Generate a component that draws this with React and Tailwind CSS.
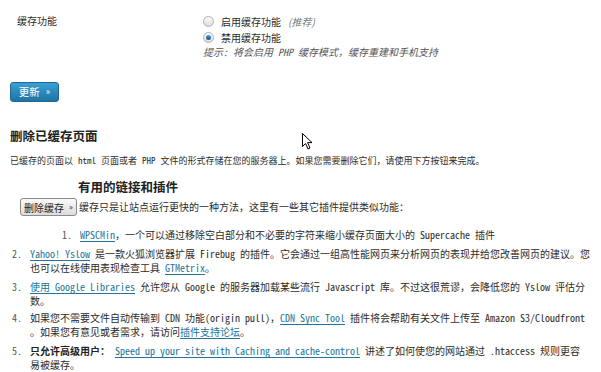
import React from "react";

const linkCls = "text-[#21759b] underline decoration-[#21759b] underline-offset-[2px]";

function Radio({ checked }) {
  return (
    <span className="flex h-[11px] w-[11px] items-center justify-center rounded-full border border-[#b0b0b0] bg-linear-to-b from-[#fafafa] to-[#dedede]">
      {checked && (
        <span className="h-[5px] w-[5px] rounded-full bg-linear-to-b from-[#4a9fd8] to-[#14558a]" />
      )}
    </span>
  );
}

function Item({ n, children }) {
  return (
    <li className="flex">
      <span className="w-[18px] shrink-0 text-[#555]">{n}.</span>
      <div className="whitespace-nowrap">{children}</div>
    </li>
  );
}

export default function App() {
  return (
    <div className="relative h-[372px] w-[601px] overflow-hidden bg-white text-[#2b2b2b] font-['Noto_Sans_Mono_CJK_SC','Noto_Sans_CJK_SC',sans-serif]">
      {/* cache setting */}
      <div className="flex pt-[13px] text-[10px] font-['Noto_Sans_CJK_SC',sans-serif]">
        <div className="w-[203px] pl-[17px] leading-[16px]">缓存功能</div>
        <div>
          <label className="flex h-[16px] items-center">
            <Radio />
            <span className="ml-[7px]">启用缓存功能</span>
            <i className="ml-[7px] text-[#777]">(推荐)</i>
          </label>
          <label className="flex h-[16px] items-center">
            <Radio checked />
            <span className="ml-[7px]">禁用缓存功能</span>
          </label>
          <p className="italic leading-[14px] text-[#555] font-['Noto_Sans_Mono_CJK_SC','Noto_Sans_CJK_SC',sans-serif]">
            提示: 将会启用 PHP 缓存模式，缓存重建和手机支持
          </p>
        </div>
      </div>

      <button className="ml-[10px] mt-[23px] flex h-[20px] w-[49px] items-center justify-center gap-[6px] rounded-[3px] border border-[#1d6894] bg-linear-to-b from-[#3aa0d4] to-[#1f74a3] text-[10.5px] text-white font-['Noto_Sans_CJK_SC',sans-serif]">
        <span>更新</span>
        <span className="text-[9px]">»</span>
      </button>

      <h3 className="mt-[26px] pl-[10px] text-[12.5px] font-bold leading-[16px] text-[#222]">
        删除已缓存页面
      </h3>
      <p className="mt-[10px] whitespace-nowrap pl-[10px] text-[9px] leading-[14px]">
        已缓存的页面以<span className="mx-[5px]">html</span>页面或者<span className="mx-[5px]">PHP</span>文件的形式存储在您的服务器上。如果您需要删除它们，请使用下方按钮来完成。
      </p>

      <h3 className="mt-[11px] pl-[78px] text-[12.5px] font-bold leading-[16px] text-[#222]">
        有用的链接和插件
      </h3>
      <div className="mt-[3px] flex items-center text-[10px]">
        <button className="ml-[20px] flex h-[18px] w-[57px] items-center justify-center gap-[5px] rounded-[3px] border border-[#8a8a8a] bg-linear-to-b from-[#fbfbfb] to-[#dcdcdc] text-[10px] font-medium text-[#222]">
          <span>删除缓存</span>
          <span className="text-[8px]">»</span>
        </button>
        <span className="ml-[2px] leading-[14px]">
          缓存只是让站点运行更快的一种方法，这里有一些其它插件提供类似功能：
        </span>
      </div>

      <ol className="mt-[12px] pl-[62px] text-[10px] leading-[14px]">
        <Item n="1">
          <a className={linkCls}>WPSCMin</a>，一个可以通过移除空白部分和不必要的字符来缩小缓存页面大小的 Supercache 插件
        </Item>
      </ol>

      <ol className="pl-[12px] text-[10px] leading-[14px]">
        <div className="mt-[5px]">
          <Item n="2">
            <a className={linkCls}>Yahoo! Yslow</a> 是一款火狐浏览器扩展 Firebug 的插件。它会通过一组高性能网页来分析网页的表现并给您改善网页的建议。您
            <br />
            也可以在线使用表现检查工具 <a className={linkCls}>GTMetrix</a>。
          </Item>
        </div>
        <div className="mt-[5px]">
          <Item n="3">
            <a className={linkCls}>使用 Google Libraries</a> 允许您从 Google 的服务器加载某些流行 Javascript 库。不过这很荒谬，会降低您的 Yslow 评估分
            <br />
            数。
          </Item>
        </div>
        <div className="mt-[3px]">
          <Item n="4">
            如果您不需要文件自动传输到 CDN 功能(origin pull)，<a className={linkCls}>CDN Sync Tool</a> 插件将会帮助有关文件上传至 Amazon S3/Cloudfront
            <br />
            。如果您有意见或者需求，请访问<a className={linkCls}>插件支持论坛</a>。
          </Item>
        </div>
        <div className="mt-[5px]">
          <Item n="5">
            <b className="font-bold text-[#222]">只允许高级用户：</b>{" "}
            <a className={linkCls}>Speed up your site with Caching and cache-control</a> 讲述了如何使您的网站通过 .htaccess 规则更容
            <br />
            易被缓存。
          </Item>
        </div>
      </ol>

      {/* mouse pointer */}
      <svg className="absolute left-[302px] top-[133px]" width="12" height="17" viewBox="0 0 12 17">
        <path d="M0.5 0.5 L0.5 13.5 L3.5 10.5 L6 16 L8 15 L5.6 9.6 L10 9.6 Z" fill="#fff" stroke="#000" strokeWidth="1" strokeLinejoin="miter" />
      </svg>
    </div>
  );
}
